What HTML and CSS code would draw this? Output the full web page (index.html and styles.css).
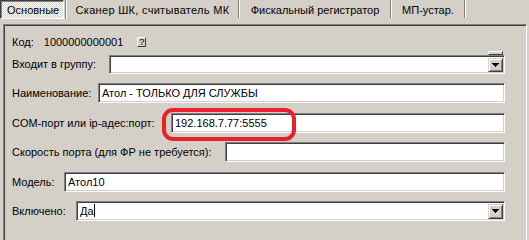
FILE: index.html
```html
<!DOCTYPE html>
<html lang="ru">
<head>
  <meta charset="UTF-8" />
  <title>Оборудование</title>
  <link rel="stylesheet" href="styles.css">
</head>
<body>

<div class="tabs">
  <div class="tab active">Основные</div>
  <i class="sep"></i>
  <div class="tab t-scan">Сканер ШК, считыватель МК</div>
  <i class="sep"></i>
  <div class="tab t-fiscal">Фискальный регистратор</div>
  <i class="sep"></i>
  <div class="tab t-old">МП-устар.</div>
  <i class="sep"></i>
</div>

<div class="panel">
  <div class="code-row">
    <span>Код:</span>
    <span class="code">1000000000001</span>
    <span class="help">?</span>
  </div>

  <div class="form">
    <div class="row f-group">
      <label>Входит в группу:</label>
      <div class="input">
        <span class="stub"></span>
        <span class="drop"><svg width="7" height="4" viewBox="0 0 7 4"><path d="M0 0h7v1h-1v1h-1v1h-1v1h-1v-1h-1v-1h-1v-1h-1z"/></svg></span>
      </div>
    </div>

    <div class="row f-name">
      <label>Наименование:</label>
      <div class="input">Атол - ТОЛЬКО ДЛЯ СЛУЖБЫ</div>
    </div>

    <div class="row f-port">
      <label>COM-порт или ip-адес:порт:</label>
      <div class="input">192.168.7.77:5555<span class="mark"></span></div>
    </div>

    <div class="row f-speed">
      <label>Скорость порта (для ФР не требуется):</label>
      <div class="input"></div>
    </div>

    <div class="row f-model">
      <label>Модель:</label>
      <div class="input">Атол10</div>
    </div>

    <div class="row f-on">
      <label>Включено:</label>
      <div class="input">Да<span class="caret"></span>
        <span class="drop"><svg width="7" height="4" viewBox="0 0 7 4"><path d="M0 0h7v1h-1v1h-1v1h-1v1h-1v-1h-1v-1h-1v-1h-1z"/></svg></span>
      </div>
    </div>
  </div>
</div>

</body>
</html>
```

FILE: styles.css
```css
* { box-sizing: border-box; }
body {
  margin: 0;
  width: 529px;
  height: 240px;
  overflow: hidden;
  background-color: #d4d0c8;
  color: #000;
  font: 11px "Liberation Sans", Arial, sans-serif;
}

/* tab strip */
.tabs {
  display: flex;
  height: 19px;
}
.tab {
  display: flex;
  align-items: center;
  justify-content: center;
  white-space: nowrap;
}
.t-scan { width: 171px; letter-spacing: 0.3px; }
.t-fiscal { width: 150px; }
.t-old { width: 72px; }
.tab.active {
  width: 64px;
  margin-right: 1px;
  justify-content: flex-start;
  padding: 0 0 0 6px;
  border: 1px solid;
  border-color: #404040 #fff #fff #404040;
  box-shadow: inset 1px 1px #808080;
  background: repeating-conic-gradient(#fff 0 25%, #d4d0c8 0 50%) 0 0 / 2px 2px;
}
.sep {
  width: 2px;
  height: 18px;
  border-left: 1px solid #808080;
  border-right: 1px solid #fff;
}

/* page body */
.panel {
  height: 230px;
  margin: 5px 2px 0 3px;
  padding: 8px 21px 0 8px;
  border: 1px solid;
  border-color: #808080 #fff #fff #808080;
  box-shadow: inset 1px 1px #404040, inset -1px -1px #d4d0c8;
}
.code-row {
  display: flex;
  align-items: center;
  height: 18px;
  margin-bottom: 3px;
}
.code { margin-left: 10px; }
.help {
  width: 9px;
  height: 10px;
  margin-left: 14px;
  display: flex;
  align-items: center;
  justify-content: center;
  font-size: 9px;
  border: 1px solid;
  border-color: #fff #404040 #404040 #fff;
}

.form {
  display: grid;
  row-gap: 9.4px;
}
.row {
  display: flex;
  align-items: center;
  height: 20px;
}
.row label { flex: none; }
.f-group label { width: 97px; }
.f-name label { width: 86px; }
.f-port label { width: 159px; }
.f-speed label { width: 213px; }
.f-model label { width: 52px; }
.f-on label { width: 64px; }

.input {
  position: relative;
  flex: 1;
  height: 20px;
  display: flex;
  align-items: center;
  padding: 0 1px 0 3px;
  background-color: #fff;
  border: 1px solid;
  border-color: #808080 #fff #fff #808080;
  box-shadow: inset 1px 1px #404040, inset -1px -1px #d4d0c8;
}
.f-group .input { height: 19px; }

.drop {
  position: absolute;
  right: 1px;
  bottom: 1px;
  width: 15px;
  height: 15px;
  display: flex;
  align-items: center;
  justify-content: center;
  background-color: #d4d0c8;
  border: 1px solid;
  border-color: #d4d0c8 #404040 #404040 #d4d0c8;
  box-shadow: inset 1px 1px #fff, inset -1px -1px #808080;
}
.f-group .drop { height: 14px; }
.stub {
  position: absolute;
  right: 1px;
  top: -5px;
  width: 15px;
  height: 4px;
  background-color: #d4d0c8;
  border: 1px solid;
  border-color: #fff #404040 #404040 #fff;
}
.caret {
  width: 1px;
  height: 13px;
  background-color: #000;
}

/* red annotation round the port field */
.mark {
  position: absolute;
  left: -10px;
  top: -6px;
  width: 134px;
  height: 33px;
  border: 4px solid #e8202a;
  border-radius: 11px;
}
```
